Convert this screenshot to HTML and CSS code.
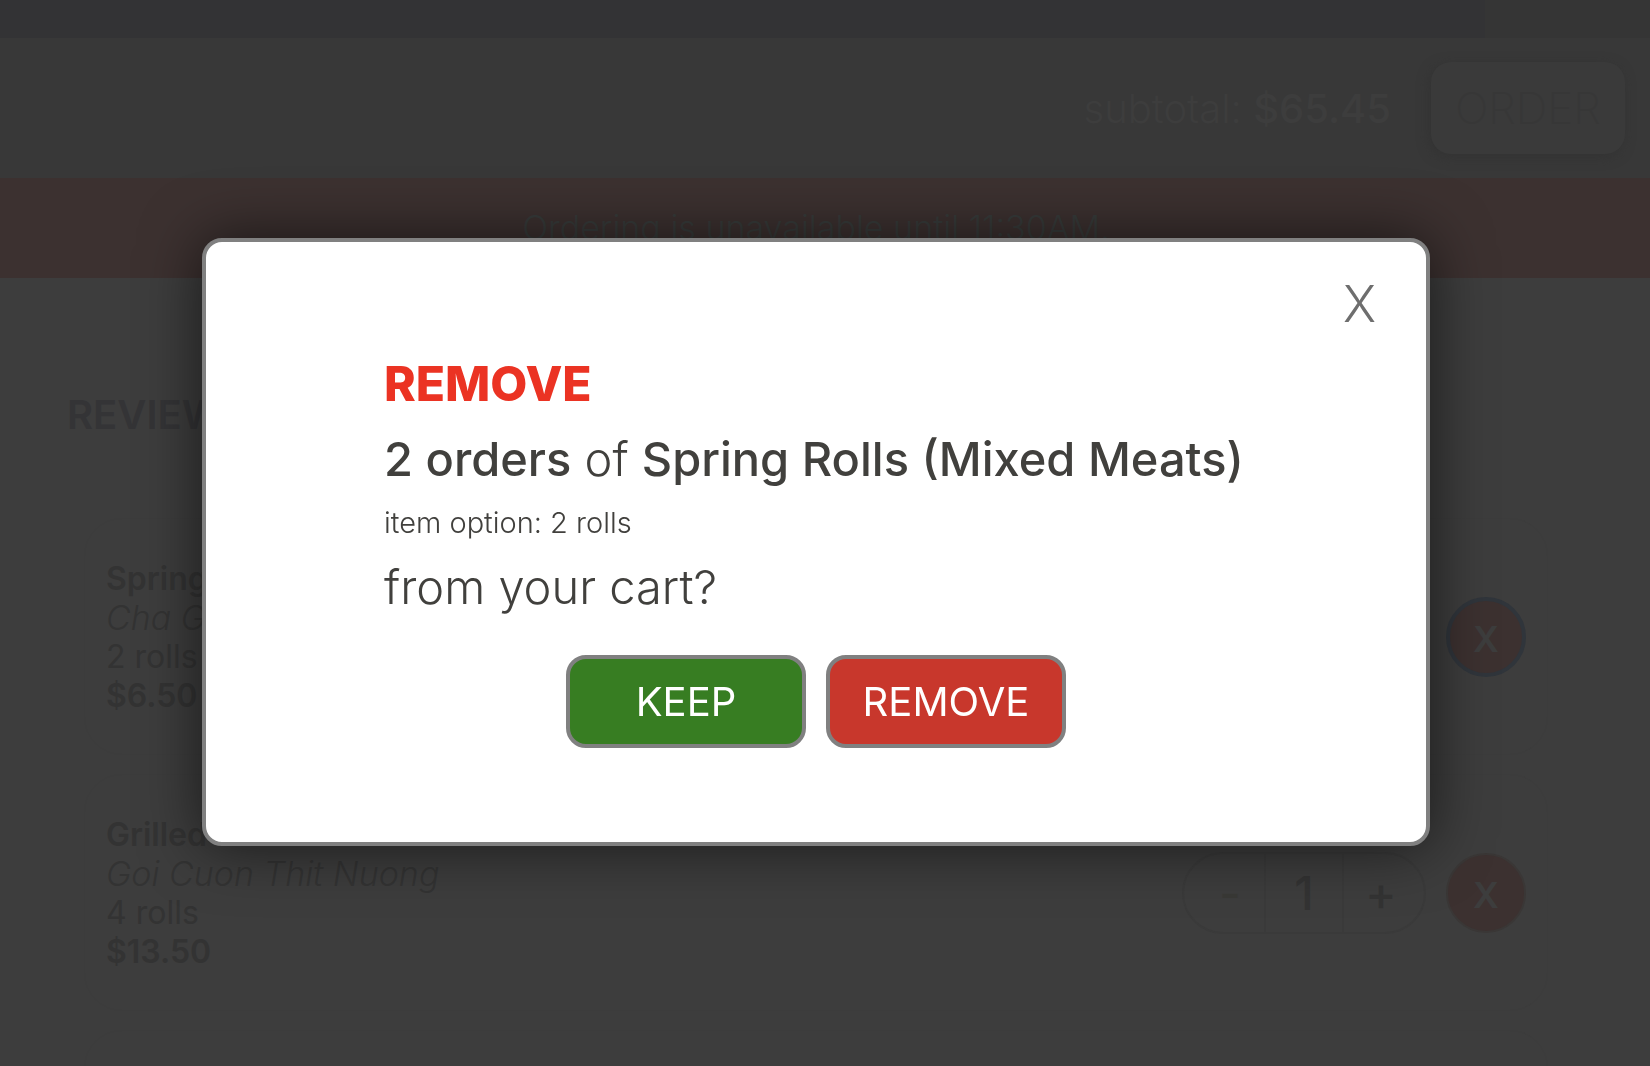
FILE: index.html
```html
<!DOCTYPE html>
<html lang="en">
<head>
<meta charset="utf-8">
<meta name="viewport" content="width=device-width, initial-scale=1">
<title>Review order</title>
<link rel="stylesheet" href="styles.css">
</head>
<body>
<div class="page">
  <div class="top-strip"><div class="top-strip-fill"></div></div>
  <header class="header">
    <p class="subtotal">subtotal: <strong>$65.45</strong></p>
    <button class="order" type="button">ORDER</button>
  </header>
  <p class="notice">Ordering is unavailable until 11:30AM.</p>
  <main class="cart">
    <h1 class="cart-title">REVIEW</h1>
    <article class="item">
      <div class="item-text">
        <h2 class="item-name">Spring</h2>
        <p class="item-alt">Cha G</p>
        <p>2 rolls</p>
        <p class="item-price">$6.50</p>
      </div>
      <button class="delete delete-focused" type="button">X</button>
    </article>
    <article class="item">
      <div class="item-text">
        <h2 class="item-name">Grilled</h2>
        <p class="item-alt">Goi Cuon Thit Nuong</p>
        <p>4 rolls</p>
        <p class="item-price">$13.50</p>
      </div>
      <div class="stepper">
        <button class="step step-minus" type="button">-</button>
        <output class="count">1</output>
        <button class="step step-plus" type="button">+</button>
      </div>
      <button class="delete" type="button">X</button>
    </article>
    <article class="item"></article>
  </main>
</div>
<div class="overlay">
  <section class="dialog" role="dialog" aria-modal="true" aria-labelledby="dialog-title">
    <button class="close" type="button">X</button>
    <div class="message">
      <h2 class="dialog-title" id="dialog-title">REMOVE</h2>
      <p class="line"><strong>2 orders</strong> of <strong>Spring Rolls (Mixed Meats)</strong></p>
      <p class="option">item option: 2 rolls</p>
      <p class="line">from your cart?</p>
    </div>
    <div class="actions">
      <button class="action keep" type="button">KEEP</button>
      <button class="action remove" type="button">REMOVE</button>
    </div>
  </section>
</div>
</body>
</html>
```
FILE: styles.css
```css
* {
  box-sizing: border-box;
}

body,
h1,
h2,
p {
  margin: 0;
}

body {
  background: #3d3d3d;
  color: #333333;
  font-family: Inter, "Liberation Sans", sans-serif;
}

button {
  padding: 0;
  border: 0;
  background: none;
  color: inherit;
  font: inherit;
  cursor: pointer;
}

.page {
  height: 100vh;
  overflow: hidden;
}

.top-strip {
  height: 38px;
  background: #353535;
}

.top-strip-fill {
  width: 90%;
  height: 100%;
  background: #333335;
}

.header {
  display: flex;
  align-items: center;
  justify-content: flex-end;
  gap: 40px;
  height: 140px;
  padding-right: 25px;
  background: #383838;
}

.subtotal {
  color: #3d3d3d;
  font-size: 40px;
  font-weight: 300;
}

.subtotal strong {
  font-weight: 500;
}

.order {
  width: 194px;
  height: 92px;
  border-radius: 20px;
  background: #3a3a3a;
  box-shadow: -2px 3px 12px #333333;
  color: #373737;
  font-size: 44px;
  font-weight: 200;
}

.notice {
  height: 100px;
  padding-right: 18px;
  background: #3c3130;
  color: #373b3a;
  font-size: 34px;
  font-weight: 300;
  line-height: 100px;
  text-align: center;
}

.cart {
  display: flex;
  flex-direction: column;
  gap: 19px;
  padding: 112px 102px 0 84px;
}

.cart-title {
  margin: 0 0 60px -17px;
  color: #343436;
  font-size: 40px;
  font-weight: 600;
  line-height: 49px;
}

.item {
  display: flex;
  flex-shrink: 0;
  align-items: center;
  gap: 20px;
  height: 237px;
  padding: 0 21px;
  border: 1px solid #3c3c3c;
  border-radius: 38px;
  font-size: 32px;
  line-height: 39px;
}

.item-text {
  flex: 1;
}

.item-name {
  font-size: 32px;
  font-weight: 600;
}

.item-alt {
  font-size: 34px;
  font-style: italic;
  font-weight: 300;
}

.item-price {
  font-weight: 600;
}

.stepper {
  display: flex;
  width: 244px;
  height: 82px;
  border: 2px solid #3a3a3a;
  border-radius: 41px;
  font-size: 47px;
  font-weight: 500;
  line-height: 78px;
  text-align: center;
}

.step,
.count {
  width: 80px;
}

.step-minus {
  padding-left: 12px;
  color: #393936;
}

.step-plus {
  padding-right: 6px;
}

.count {
  border: solid #3a3a3a;
  border-width: 0 2px;
}

.delete {
  width: 80px;
  height: 80px;
  padding-top: 6px;
  border: 2px solid #3a3736;
  border-radius: 50%;
  background: #3c3130;
  color: #3d3d3d;
  font-size: 36px;
  font-weight: 600;
}

.delete-focused {
  border: 4px solid #30353b;
}

.overlay {
  position: fixed;
  inset: 0;
  display: flex;
  align-items: center;
  justify-content: center;
  padding: 18px 18px 0 0;
}

.dialog {
  display: flex;
  flex-direction: column;
  width: 90%;
  max-width: 1228px;
  padding: 34px 0 94px;
  border: 4px solid #808080;
  border-radius: 20px;
  background: #ffffff;
  box-shadow: 0 0 60px rgba(0, 0, 0, 0.6);
  color: #41403d;
}

.close {
  align-self: flex-end;
  margin: 0 50px 24px 0;
  color: #6e6e6e;
  font-size: 50px;
  font-weight: 300;
  line-height: 56px;
}

.message {
  display: flex;
  flex-direction: column;
  gap: 19px;
  padding: 0 178px;
  font-size: 47px;
  line-height: 56px;
}

.dialog-title {
  color: #eb3323;
  font-size: 48px;
  font-weight: 800;
}

.line {
  font-weight: 300;
  white-space: nowrap;
}

.line strong {
  font-weight: 500;
}

.option {
  font-size: 29px;
  font-weight: 300;
  line-height: 34px;
}

.actions {
  display: flex;
  justify-content: center;
  gap: 20px;
  margin-top: 40px;
}

.action {
  width: 240px;
  height: 93px;
  border: 4px solid #808080;
  border-radius: 20px;
  color: #ffffff;
  font-size: 40px;
}

.keep {
  background: #377d22;
}

.remove {
  background: #c8372c;
}
```
